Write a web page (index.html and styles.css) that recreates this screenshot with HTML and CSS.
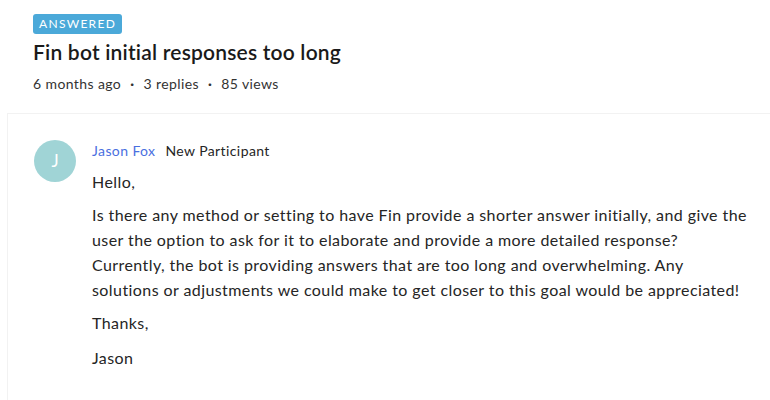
FILE: index.html
```html
<!DOCTYPE html>
<html lang="en">
<head>
	<meta charset="UTF-8">
	<title>Fin bot initial responses too long</title>
	<link rel="stylesheet" href="styles.css">
</head>
<body>
	<div class="page">
		<div class="head">
			<span class="badge">Answered</span>
			<h1 class="title">Fin bot initial responses too long</h1>
			<div class="meta">
				<span>6 months ago</span>
				<span class="dot">&middot;</span>
				<span>3 replies</span>
				<span class="dot">&middot;</span>
				<span>85 views</span>
			</div>
		</div>
		<div class="post">
			<div class="avatar">J</div>
			<div class="body">
				<div class="author">
					<a class="name" href="#">Jason Fox</a>
					<span class="role">New Participant</span>
				</div>
				<p class="hello">Hello,</p>
				<p>Is there any method or setting to have Fin provide a shorter answer initially, and give the user the option to ask for it to elaborate and provide a more detailed response? Currently, the bot is providing answers that are too long and overwhelming. Any solutions or adjustments we could make to get closer to this goal would be appreciated!</p>
				<p>Thanks,</p>
				<p class="sign">Jason</p>
			</div>
		</div>
	</div>
</body>
</html>
```
FILE: styles.css
```css
*{
	margin: 0;
	padding: 0;
	box-sizing: border-box;
}
body{
	background: #fff;
	font-family: Lato, "Liberation Sans", sans-serif;
	color: #222;
	width: 770px;
	height: 400px;
	overflow: hidden;
}
.page{
	height: 400px;
}
.head{
	padding: 12px 0 0 33px;
	height: 113px;
}
.badge{
	display: inline-block;
	height: 20px;
	line-height: 20px;
	padding: 0 6px;
	border-radius: 3px;
	background: #4ba9d9;
	color: #fff;
	font-size: 12px;
	letter-spacing: 1.3px;
	text-transform: uppercase;
}
.title{
	margin-top: 4px;
	font-size: 21px;
	font-weight: 600;
	line-height: 28px;
	letter-spacing: 0.2px;
	color: #1a1a1a;
}
.meta{
	margin-top: 9px;
	font-size: 14px;
	letter-spacing: 0.4px;
	color: #333;
	display: flex;
	gap: 9px;
}
.dot{
	font-weight: 700;
}
.post{
	margin-left: 7px;
	border-left: 1px solid #f2f2f2;
	border-top: 1px solid #f2f2f2;
	display: flex;
	gap: 16px;
	padding: 26px 0 0 26px;
	height: 287px;
}
.avatar{
	flex: none;
	width: 42px;
	height: 42px;
	border-radius: 50%;
	background: #a0d4d6;
	color: #fff;
	font-size: 17px;
	text-align: center;
	line-height: 42px;
}
.body{
	width: 661px;
	font-size: 16px;
	line-height: 25px;
	letter-spacing: 0.42px;
	color: #252525;
}
.author{
	font-size: 14px;
	line-height: 22px;
	letter-spacing: 0.4px;
}
.name{
	color: #4a6fe0;
	text-decoration: none;
	margin-right: 6px;
}
.body p{
	margin-top: 8px;
}
.body .hello{
	margin-top: 7px;
}
.body .sign{
	margin-top: 10px;
}
```
